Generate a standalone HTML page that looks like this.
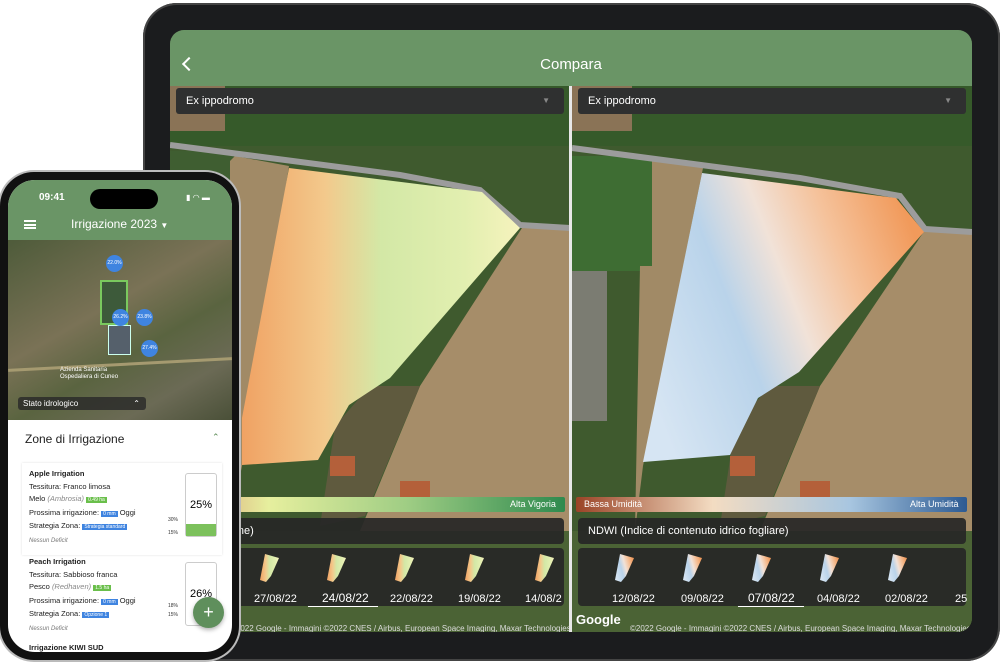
<!DOCTYPE html>
<html><head><meta charset="utf-8"><style>
*{margin:0;padding:0;box-sizing:border-box}
body{width:1000px;height:666px;background:#fff;position:relative;overflow:hidden;font-family:"Liberation Sans",sans-serif}
.abs{position:absolute}
.tab{left:143px;top:3px;width:857px;height:658px;background:#1b1c1e;border-radius:34px;box-shadow:0 0 0 2px #444 inset}
.scr{left:170px;top:30px;width:802px;height:602px;background:#3d4a2c;border-radius:14px;overflow:hidden}
.hdr{left:0;top:0;width:802px;height:56px;background:#6a9566;color:#fff;font-size:15px;text-align:center;line-height:70px}
.sel{height:26px;background:#2f3030;color:#fff;font-size:11px;line-height:26px;padding-left:10px;border-radius:3px}
.bar{height:15px;font-size:9px;color:#fff;line-height:15px;border-radius:2px}
.dk{background:rgba(38,38,38,.92);border-radius:4px;color:#fff}
.dates{font-size:11px;color:#fff}
.ph{left:0;top:172px;width:239px;height:488px;background:#111;border-radius:34px;box-shadow:0 0 0 2px #bbb}
.ps{left:8px;top:180px;width:224px;height:472px;background:#fff;border-radius:27px;overflow:hidden}
</style></head><body>
<div class="abs tab"></div>
<div class="abs scr">
 <svg class="abs" style="left:0;top:56px" width="802" height="546">
  <defs>
   <linearGradient id="g1" x1="0" x2="1" y1="0" y2="0"><stop offset="0" stop-color="#f0a263"/><stop offset=".3" stop-color="#f3c98c"/><stop offset=".5" stop-color="#d3e8a6"/><stop offset=".8" stop-color="#e2efb0"/><stop offset="1" stop-color="#f6f3bd"/></linearGradient>
   <linearGradient id="g2" x1="0" x2="1" y1=".7" y2=".3"><stop offset="0" stop-color="#d6e5f3"/><stop offset=".35" stop-color="#b9d3ea"/><stop offset=".55" stop-color="#f1e2d8"/><stop offset=".75" stop-color="#f5c29b"/><stop offset="1" stop-color="#f19a5b"/></linearGradient>
   <linearGradient id="bl" x1="0" x2="1"><stop offset="0" stop-color="#d68a6c"/><stop offset=".25" stop-color="#e6ef9e"/><stop offset=".6" stop-color="#9fcd84"/><stop offset="1" stop-color="#2e8a4e"/></linearGradient>
   <linearGradient id="br" x1="0" x2="1"><stop offset="0" stop-color="#9a4326"/><stop offset=".35" stop-color="#f3dcc2"/><stop offset=".7" stop-color="#a8c6e0"/><stop offset="1" stop-color="#2c5a92"/></linearGradient>
  </defs>
  <rect width="802" height="546" fill="#3f5a2e"/>
  <!-- left panel -->
  <rect x="0" y="0" width="400" height="60" fill="#365a2a"/>
  <rect x="0" y="0" width="55" height="45" fill="#8a7356"/>
  <rect x="0" y="65" width="65" height="380" fill="#3f5e31"/>
  <polygon points="65,70 119,80 72,380 60,440 60,75" fill="#a18a66"/>
  <polygon points="352,142 400,142 400,445 190,445 250,300" fill="#a68d69"/>
  <polygon points="200,300 250,300 195,430 150,440 165,340" fill="#5f5a3e"/>
  <rect x="160" y="370" width="25" height="20" fill="#b4603a"/>
  <rect x="230" y="395" width="30" height="18" fill="#b4603a"/>
  <rect x="0" y="445" width="400" height="110" fill="#4b6335"/>
  <path d="M0 59 L230 89 L310 104 L350 139 L400 142" stroke="#9c9c9c" stroke-width="6" fill="none"/>
  <polygon points="119,82 312,106 350,142 220,292 179,319 148,374 72,379 72,332" fill="url(#g1)"/>
  <!-- right panel -->
  <rect x="402" y="0" width="400" height="60" fill="#365a2a"/>
  <rect x="402" y="0" width="60" height="45" fill="#8a7356"/>
  <rect x="402" y="70" width="80" height="115" fill="#3e6d33"/>
  <rect x="402" y="185" width="35" height="150" fill="#7b7c72"/>
  <polygon points="482,70 533,82 473,380 465,445 470,180 482,180" fill="#a18a66"/>
  <polygon points="755,144 802,146 802,445 590,445 650,300" fill="#a68d69"/>
  <polygon points="600,300 650,300 595,430 550,440 565,340" fill="#5f5a3e"/>
  <rect x="560" y="370" width="25" height="20" fill="#b4603a"/>
  <rect x="630" y="395" width="30" height="18" fill="#b4603a"/>
  <rect x="402" y="445" width="400" height="110" fill="#4b6335"/>
  <path d="M402 62 L630 92 L730 110 L755 143 L802 146" stroke="#9c9c9c" stroke-width="6" fill="none"/>
  <polygon points="532,87 726,112 754,146 629,286 588,312 560,369 473,376" fill="url(#g2)"/>
  <rect x="399" y="0" width="3" height="546" fill="#e8e8e8"/>
  <rect x="0" y="411" width="395" height="15" rx="2" fill="url(#bl)"/>
  <rect x="406" y="411" width="391" height="15" rx="2" fill="url(#br)"/>
 </svg>
 <div class="abs hdr">Compara</div>
 <div class="abs" style="left:14px;top:29px;width:10px;height:10px;border-left:2px solid #fff;border-bottom:2px solid #fff;transform:rotate(45deg)"></div>
 <div class="abs sel" style="left:6px;top:58px;width:388px">Ex ippodromo<span style="position:absolute;right:14px;color:#888;font-size:8px">▼</span></div>
 <div class="abs sel" style="left:408px;top:58px;width:388px">Ex ippodromo<span style="position:absolute;right:14px;color:#888;font-size:8px">▼</span></div>
 <div class="abs bar" style="left:340px;top:467px">Alta Vigoria</div>
 <div class="abs bar" style="left:414px;top:467px">Bassa Umidità</div>
 <div class="abs bar" style="left:740px;top:467px">Alta Umidità</div>
 <div class="abs dk" style="left:0;top:488px;width:394px;height:26px;font-size:11px;line-height:26px">e di vegetazione)</div>
 <div class="abs dk" style="left:408px;top:488px;width:388px;height:26px;font-size:11px;line-height:26px;padding-left:10px">NDWI (Indice di contenuto idrico fogliare)</div>
 <div class="abs dk" style="left:0;top:518px;width:394px;height:58px"></div>
 <div class="abs dk" style="left:408px;top:518px;width:388px;height:58px"></div>
 <svg class="abs" style="left:0;top:518px" width="802" height="60">
  <g fill="url(#g1)"><polygon points="95,6 109,10 101,28 96,34 90,32"/><polygon points="230,6 244,10 236,28 231,34 225,32"/><polygon points="300,6 314,10 306,28 301,34 295,32"/><polygon points="370,6 384,10 376,28 371,34 365,32"/><polygon points="162,6 176,10 168,28 163,34 157,32"/></g>
  <g fill="url(#g2)"><polygon points="450,6 464,10 456,28 451,34 445,32"/><polygon points="518,6 532,10 524,28 519,34 513,32"/><polygon points="587,6 601,10 593,28 588,34 582,32"/><polygon points="655,6 669,10 661,28 656,34 650,32"/><polygon points="723,6 737,10 729,28 724,34 718,32"/></g>
 </svg>
 <div class="abs dates" style="left:84px;top:563px">27/08/22</div>
 <div class="abs dates" style="left:152px;top:561px;font-size:12px">24/08/22</div>
 <div class="abs" style="left:138px;top:576px;width:70px;height:1px;background:#fff"></div>
 <div class="abs dates" style="left:220px;top:563px">22/08/22</div>
 <div class="abs dates" style="left:288px;top:563px">19/08/22</div>
 <div class="abs dates" style="left:355px;top:563px">14/08/2</div>
 <div class="abs dates" style="left:442px;top:563px">12/08/22</div>
 <div class="abs dates" style="left:511px;top:563px">09/08/22</div>
 <div class="abs dates" style="left:578px;top:561px;font-size:12px">07/08/22</div>
 <div class="abs" style="left:568px;top:576px;width:66px;height:1px;background:#fff"></div>
 <div class="abs dates" style="left:647px;top:563px">04/08/22</div>
 <div class="abs dates" style="left:715px;top:563px">02/08/22</div>
 <div class="abs dates" style="left:785px;top:563px">25</div>
 <div class="abs" style="left:406px;top:582px;color:#fff;font-size:13px;font-weight:bold">Google</div>
 <div class="abs" style="left:460px;top:594px;color:#ddd;font-size:8px;white-space:nowrap">©2022 Google - Immagini ©2022 CNES / Airbus, European Space Imaging, Maxar Technologies</div>
 <div class="abs" style="left:60px;top:594px;color:#ddd;font-size:8px;white-space:nowrap">©2022 Google - Immagini ©2022 CNES / Airbus, European Space Imaging, Maxar Technologies</div>
</div>

<div class="abs ph"></div>
<div class="abs ps">
 <div class="abs" style="left:0;top:0;width:224px;height:60px;background:#6a9566"></div>
 <div class="abs" style="left:31px;top:12px;color:#fff;font-size:10px;font-weight:bold">09:41</div>
 <div class="abs" style="left:82px;top:9px;width:68px;height:20px;background:#000;border-radius:10px"></div>
 <div class="abs" style="left:178px;top:13px;width:30px;height:7px;color:#fff;font-size:8px">▮ ◠ ▬</div>
 <div class="abs" style="left:16px;top:40px;width:12px;height:9px;border-top:2px solid #fff;border-bottom:2px solid #fff"></div>
 <div class="abs" style="left:16px;top:43.5px;width:12px;height:2px;background:#fff"></div>
 <div class="abs" style="left:63px;top:37px;color:#fff;font-size:12px">Irrigazione 2023 <span style="font-size:8px">▼</span></div>
 <div class="abs" style="left:0;top:60px;width:224px;height:180px;background:linear-gradient(150deg,#4e5b3a,#7a7256 40%,#5a6440 60%,#6b6a55 80%,#4a5038)"></div>
 <div class="abs" style="left:0;top:183px;width:224px;height:3px;background:#a59a70;transform:rotate(-3deg)"></div>
 <div class="abs" style="left:92px;top:100px;width:28px;height:45px;background:#3d5a3a;border:2px solid #7ac95e"></div>
 <div class="abs" style="left:100px;top:145px;width:23px;height:30px;background:#55606b;border:1px solid #cfe"></div>
 <div class="abs" style="left:98px;top:75px;width:17px;height:17px;border-radius:50%;background:#3f84e0;color:#fff;font-size:5px;line-height:17px;text-align:center">22.0%</div>
 <div class="abs" style="left:104px;top:129px;width:17px;height:17px;border-radius:50%;background:#3f84e0;color:#fff;font-size:5px;line-height:17px;text-align:center">26.2%</div>
 <div class="abs" style="left:128px;top:129px;width:17px;height:17px;border-radius:50%;background:#3f84e0;color:#fff;font-size:5px;line-height:17px;text-align:center">23.8%</div>
 <div class="abs" style="left:133px;top:160px;width:17px;height:17px;border-radius:50%;background:#3f84e0;color:#fff;font-size:5px;line-height:17px;text-align:center">27.4%</div>
 <div class="abs" style="left:52px;top:187px;color:#fff;font-size:6px;line-height:7px">Azienda Sanitaria<br>Ospedaliera di Cuneo</div>
 <div class="abs" style="left:10px;top:217px;width:128px;height:13px;background:rgba(40,40,40,.8);border-radius:3px;color:#fff;font-size:8px;line-height:13px;padding-left:5px">Stato idrologico <span style="position:absolute;right:6px">⌃</span></div>
 <div class="abs" style="left:17px;top:252px;font-size:12px;color:#222">Zone di Irrigazione</div>
 <div class="abs" style="left:204px;top:252px;font-size:9px;color:#5a8a55">⌃</div>
 <div class="abs" style="left:14px;top:283px;width:200px;height:92px;box-shadow:0 0 2px #ddd"></div>
 <div class="abs" style="left:21px;top:288px;font-size:7.5px;color:#222;line-height:12.5px">
  <b>Apple Irrigation</b><br>Tessitura: Franco limosa<br>Melo <i style="color:#888">(Ambrosia)</i> <span style="background:#6abf4b;color:#fff;font-size:5px;padding:0 2px">0.49 ha</span><br>Prossima irrigazione: <span style="background:#3f84e0;color:#fff;font-size:5px;padding:0 2px">0 mm</span> Oggi<br>Strategia Zona: <span style="background:#3f84e0;color:#fff;font-size:5px;padding:0 2px">Strategia standard</span><br><i style="color:#777;font-size:6px;line-height:6px">Nessun Deficit</i></div>
 <div class="abs" style="left:177px;top:293px;width:32px;height:64px;border:1px solid #ccc;border-radius:3px;text-align:center;font-size:11px;padding-top:25px">25%</div>
 <div class="abs" style="left:178px;top:344px;width:30px;height:12px;background:#7cc15c"></div>
 <div class="abs" style="left:160px;top:334px;font-size:5px;line-height:13px;color:#333">30%<br>15%</div>
 <div class="abs" style="left:21px;top:376px;font-size:7.5px;color:#222;line-height:12.5px">
  <b>Peach Irrigation</b><br>Tessitura: Sabbioso franca<br>Pesco <i style="color:#888">(Redhaven)</i> <span style="background:#6abf4b;color:#fff;font-size:5px;padding:0 2px">1.5 ha</span><br>Prossima irrigazione: <span style="background:#3f84e0;color:#fff;font-size:5px;padding:0 2px">0 mm</span> Oggi<br>Strategia Zona: <span style="background:#3f84e0;color:#fff;font-size:5px;padding:0 2px">Opzione 1</span><br><i style="color:#777;font-size:6px;line-height:6px">Nessun Deficit</i></div>
 <div class="abs" style="left:177px;top:382px;width:32px;height:64px;border:1px solid #ccc;border-radius:3px;text-align:center;font-size:11px;padding-top:25px">26%</div>
 <div class="abs" style="left:160px;top:422px;font-size:5px;line-height:9px;color:#333">18%<br>15%</div>
 <div class="abs" style="left:185px;top:417px;width:31px;height:31px;border-radius:50%;background:#5f8f5c;color:#fff;font-size:18px;text-align:center;line-height:30px;box-shadow:0 2px 4px rgba(0,0,0,.3)">+</div>
 <div class="abs" style="left:21px;top:463px;font-size:7.5px;color:#222;font-weight:bold">Irrigazione KIWI SUD</div>
</div>
</body></html>
